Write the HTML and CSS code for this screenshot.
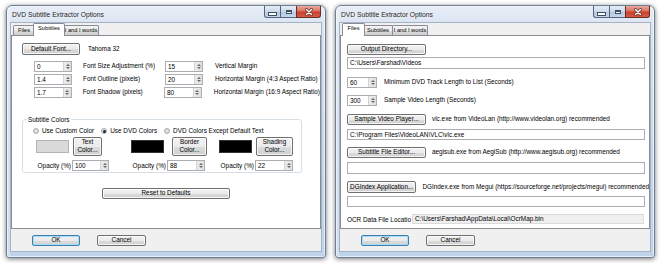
FILE: index.html
```html
<!DOCTYPE html>
<html>
<head>
<meta charset="utf-8">
<title>DVD Subtitle Extractor Options</title>
<link rel="stylesheet" href="styles.css">
</head>
<body>
<div class="desktop">
  <div class="window">
    <div class="titlebar">
      <span class="title">DVD Subtitle Extractor Options</span>
      <div class="caption">
        <span class="cbtn cmin"><i></i></span>
        <span class="cbtn cmax"><i></i></span>
        <span class="cbtn cclose"><svg width="10" height="8" viewBox="0 0 10 8"><path d="M2.5 1.5 L7.5 6.5 M7.5 1.5 L2.5 6.5" stroke="#5a1a14" stroke-width="2.6" stroke-linecap="round"/><path d="M2.5 1.5 L7.5 6.5 M7.5 1.5 L2.5 6.5" stroke="#fff" stroke-width="1.5" stroke-linecap="round"/></svg></span>
      </div>
    </div>
    <div class="client">
      <div class="tabs">
        <span class="tab t-files">Files</span>
        <span class="tab t-subs active">Subtitles</span>
        <span class="tab t-words">I and I words</span>
      </div>
      <div class="page page-subs">
        <div class="font-row">
          <span class="btn btn-font">Default Font...</span>
          <span class="font-name">Tahoma 32</span>
        </div>
        <div class="spin-rows">
          <div class="srow">
            <span class="spin s38"><span class="val">0</span><span class="arrows"><i class="up"></i><i class="dn"></i></span></span>
            <span class="lbl l82">Font Size Adjustment (%)</span>
            <span class="spin s38"><span class="val">15</span><span class="arrows"><i class="up"></i><i class="dn"></i></span></span>
            <span class="lbl l2">Vertical Margin</span>
          </div>
          <div class="srow">
            <span class="spin s38"><span class="val">1.4</span><span class="arrows"><i class="up"></i><i class="dn"></i></span></span>
            <span class="lbl l82">Font Outline (pixels)</span>
            <span class="spin s38"><span class="val">20</span><span class="arrows"><i class="up"></i><i class="dn"></i></span></span>
            <span class="lbl l2">Horizontal Margin (4:3 Aspect Ratio)</span>
          </div>
          <div class="srow">
            <span class="spin s38"><span class="val">1.7</span><span class="arrows"><i class="up"></i><i class="dn"></i></span></span>
            <span class="lbl l82">Font Shadow (pixels)</span>
            <span class="spin s38"><span class="val">80</span><span class="arrows"><i class="up"></i><i class="dn"></i></span></span>
            <span class="lbl l2">Horizontal Margin (16:9 Aspect Ratio)</span>
          </div>
        </div>
        <fieldset class="group">
          <legend>Subtitle Colors</legend>
          <div class="radios">
            <span class="radio"><i class="rb"></i>Use Custom Color</span>
            <span class="radio"><i class="rb on"></i>Use DVD Colors</span>
            <span class="radio"><i class="rb"></i>DVD Colors Except Default Text</span>
          </div>
          <div class="colors">
            <div class="ccol c1">
              <div class="cline"><span class="swatch light"></span><span class="btn cbtn2 w29">Text<br>Color...</span></div>
              <div class="oline"><span class="olbl">Opacity (%)</span><span class="spin s37"><span class="val">100</span><span class="arrows"><i class="up"></i><i class="dn"></i></span></span></div>
            </div>
            <div class="ccol c2">
              <div class="cline"><span class="swatch dark"></span><span class="btn cbtn2 w35 gap8">Border<br>Color...</span></div>
              <div class="oline"><span class="olbl">Opacity (%)</span><span class="spin s38"><span class="val">88</span><span class="arrows"><i class="up"></i><i class="dn"></i></span></span></div>
            </div>
            <div class="ccol c3">
              <div class="cline"><span class="swatch dark"></span><span class="btn cbtn2 w37">Shading<br>Color...</span></div>
              <div class="oline"><span class="olbl">Opacity (%)</span><span class="spin s38"><span class="val">22</span><span class="arrows"><i class="up"></i><i class="dn"></i></span></span></div>
            </div>
          </div>
        </fieldset>
        <div class="reset-row"><span class="btn btn-reset">Reset to Defaults</span></div>
      </div>
      <div class="footer">
        <span class="btn btn-ok">OK</span>
        <span class="btn btn-cancel">Cancel</span>
      </div>
    </div>
  </div>

  <div class="window">
    <div class="titlebar">
      <span class="title">DVD Subtitle Extractor Options</span>
      <div class="caption">
        <span class="cbtn cmin"><i></i></span>
        <span class="cbtn cmax"><i></i></span>
        <span class="cbtn cclose"><svg width="10" height="8" viewBox="0 0 10 8"><path d="M2.5 1.5 L7.5 6.5 M7.5 1.5 L2.5 6.5" stroke="#5a1a14" stroke-width="2.6" stroke-linecap="round"/><path d="M2.5 1.5 L7.5 6.5 M7.5 1.5 L2.5 6.5" stroke="#fff" stroke-width="1.5" stroke-linecap="round"/></svg></span>
      </div>
    </div>
    <div class="client">
      <div class="tabs">
        <span class="tab t-files active">Files</span>
        <span class="tab t-subs">Subtitles</span>
        <span class="tab t-words">I and I words</span>
      </div>
      <div class="page page-files">
        <span class="btn btn-wide first">Output Directory...</span>
        <div class="field f12 m2">C:\Users\Farshad\Videos</div>
        <div class="frow m8">
          <span class="spin s30"><span class="val">60</span><span class="arrows"><i class="up"></i><i class="dn"></i></span></span>
          <span class="flbl">Minimum DVD Track Length to List (Seconds)</span>
        </div>
        <div class="frow m7">
          <span class="spin s30"><span class="val">300</span><span class="arrows"><i class="up"></i><i class="dn"></i></span></span>
          <span class="flbl">Sample Video Length (Seconds)</span>
        </div>
        <div class="frow m8">
          <span class="btn btn-wide">Sample Video Player...</span>
          <span class="blbl">vlc.exe from VideoLan (http://www.videolan.org) recommended</span>
        </div>
        <div class="field m4">C:\Program Files\VideoLAN\VLC\vlc.exe</div>
        <div class="frow m7">
          <span class="btn btn-wide">Subtitle File Editor...</span>
          <span class="blbl">aegisub.exe from AegiSub (http://www.aegisub.org) recommended</span>
        </div>
        <div class="field f12 m4"></div>
        <div class="frow m7">
          <span class="btn btn-wide h12">DGIndex Application...</span>
          <span class="blbl">DGIndex.exe from Megui (https://sourceforge.net/projects/megui) recommended</span>
        </div>
        <div class="field m3"></div>
        <div class="frow m7">
          <span class="ocr-lbl">OCR Data File Locatio</span>
          <span class="field ro">C:\Users\Farshad\AppData\Local\OcrMap.bin</span>
        </div>
      </div>
      <div class="footer">
        <span class="btn btn-ok">OK</span>
        <span class="btn btn-cancel">Cancel</span>
      </div>
    </div>
  </div>
</div>
</body>
</html>
```

FILE: styles.css
```css
* { box-sizing: border-box; margin: 0; padding: 0; }
html, body { background: #ffffff; }
body {
  width: 660px;
  height: 263px;
  overflow: hidden;
  font-family: "Liberation Sans", Arial, sans-serif;
  font-size: 6.4px;
  line-height: 1;
  color: #000;
}

.desktop {
  display: flex;
  gap: 9px;
  padding: 5px 0 0 6px;
}

/* ---------- window frame ---------- */
.window {
  width: 320px;
  height: 253px;
  display: flex;
  flex-direction: column;
  border: 1px solid #6d7f95;
  border-radius: 6px 6px 3px 3px;
  padding: 0 3px 5px;
  background:
    linear-gradient(90deg, rgba(255,255,255,0) 0, rgba(255,255,255,.35) 2px, rgba(255,255,255,0) 4px),
    linear-gradient(180deg, #e8eef7 0%, #d9e4f1 8%, #cbdaed 45%, #bfd3ea 100%);
  box-shadow: 0 1px 5px rgba(0,0,0,.55), inset 0 0 0 1px rgba(255,255,255,.6);
}

.titlebar {
  height: 16px;
  display: flex;
  justify-content: space-between;
  align-items: flex-start;
}
.title {
  padding: 6px 0 0 2px;
  font-size: 6.7px;
  color: #1b1b1b;
  text-shadow: 0 0 3px rgba(255,255,255,.9);
}
.caption {
  display: flex;
  margin-right: 1px;
}
.cbtn {
  height: 12px;
  display: flex;
  align-items: center;
  justify-content: center;
  border: 1px solid #55667c;
  border-top: none;
}
.cmin, .cmax {
  width: 16px;
  background: linear-gradient(180deg, #e6eef8 0%, #cbd9ea 50%, #b2c6de 51%, #c4d6ec 100%);
}
.cmin { border-radius: 0 0 0 3px; border-right: none; }
.cmax { border-right: none; }
.cmin i {
  width: 7px; height: 2px; margin-top: 4px;
  background: #fff; border: 1px solid #3e4e63; box-sizing: content-box;
}
.cmax i {
  width: 6px; height: 4px;
  border: 1px solid #3e4e63; box-shadow: inset 0 0 0 1px #fff;
  border-top-width: 2px; background: transparent;
}
.cclose {
  width: 25px;
  border-radius: 0 0 3px 0;
  border-color: #6a2b22;
  background: linear-gradient(180deg, #eaa99c 0%, #d9705f 48%, #c73f2c 52%, #d65a45 100%);
}

/* ---------- client ---------- */
.client {
  flex: 1;
  display: flex;
  flex-direction: column;
  background: #f0f0f0;
  border: 1px solid #a3b2c5;
}

.tabs {
  height: 12px;
  display: flex;
  align-items: flex-end;
  padding-left: 2px;
  font-size: 5.7px;
}
.tab {
  height: 10px;
  display: flex;
  align-items: center;
  justify-content: center;
  border: 1px solid #898c95;
  border-bottom: none;
  border-radius: 2px 2px 0 0;
  background: linear-gradient(180deg, #f4f4f4 0%, #ebebeb 50%, #dddddd 51%, #cfcfcf 100%);
  color: #000;
}
.t-files { width: 22px; }
.t-subs { width: 30px; margin-left: -1px; }
.t-words { width: 36px; margin-left: -1px; }
.tab.active {
  height: 13px;
  margin-bottom: -1px;
  background: #fff;
  position: relative;
  z-index: 2;
  padding-bottom: 2px;
}
.t-subs.active { width: 32px; margin-left: -2px; margin-right: -1px; }
.t-files.active { width: 23px; margin-left: 0; margin-right: -1px; }

.page {
  height: 194px;
  background: #fff;
  border: 1px solid #898c95;
  position: relative;
  overflow: hidden;
}

.footer {
  flex: 1;
  display: flex;
  align-items: flex-start;
  padding: 6px 0 0 21px;
}

/* ---------- common controls ---------- */
.btn {
  display: flex;
  align-items: center;
  justify-content: center;
  text-align: center;
  border: 1px solid #707070;
  border-radius: 2px;
  background: linear-gradient(180deg, #f2f2f2 0%, #ebebeb 50%, #dddddd 51%, #cfcfcf 100%);
  box-shadow: inset 0 0 0 1px rgba(255,255,255,.75);
  color: #000;
  white-space: nowrap;
}
.btn-ok {
  width: 48px; height: 11px;
  border-color: #3c7fb1;
  box-shadow: inset 0 0 0 1px #a6dcf5;
}
.btn-cancel { width: 49px; height: 11px; margin-left: 17px; }

.spin {
  display: flex;
  height: 11px;
  border: 1px solid #abadb3;
  background: #fff;
}
.spin .val {
  flex: 1;
  padding: 1px 0 0 2px;
  display: flex;
  align-items: center;
}
.spin .arrows {
  width: 8px;
  display: flex;
  flex-direction: column;
  align-items: center;
  justify-content: center;
  gap: 1px;
  background: linear-gradient(90deg, #ececec, #e0e0e0);
  border-left: 1px solid #d3d3d3;
}
.spin .up, .spin .dn {
  width: 0; height: 0;
  border-left: 2px solid transparent;
  border-right: 2px solid transparent;
}
.spin .up { border-bottom: 2px solid #6b6b6b; }
.spin .dn { border-top: 2px solid #6b6b6b; }
.s38 { width: 38px; }
.s37 { width: 37px; }
.s30 { width: 30px; }

.field {
  display: flex;
  align-items: center;
  height: 11px;
  width: 298px;
  border: 1px solid #abadb3;
  background: #fff;
  padding: 1px 0 0 2px;
  white-space: nowrap;
}
.f12 { height: 12px; }

/* ---------- subtitles page ---------- */
.font-row {
  display: flex;
  align-items: center;
  margin: 7px 0 0 10px;
}
.btn-font { width: 58px; height: 12px; }
.font-name { margin-left: 8px; }

.spin-rows {
  display: flex;
  flex-direction: column;
  gap: 2px;
  margin: 6px 0 0 22px;
}
.srow { display: flex; align-items: center; }
.lbl { white-space: nowrap; }
.l82 { width: 82px; margin-left: 11px; }
.l2 { margin-left: 12px; }

.group {
  margin: 18px 18px 0 10px;
  height: 57px;
  border: 1px solid #d5dfe5;
  border-radius: 3px;
  padding: 0;
}
.group legend {
  margin-left: 4px;
  padding: 0 1px;
  line-height: 7px;
}
.radios {
  display: flex;
  align-items: center;
  margin: 5px 0 0 10px;
  white-space: nowrap;
}
.radio { display: flex; align-items: center; }
.radio + .radio { margin-left: 7px; }
.rb {
  width: 6px; height: 6px;
  border-radius: 50%;
  border: 1px solid #a9a9a9;
  background: radial-gradient(circle, #e6e6e6 0%, #d2d2d2 100%);
  margin-right: 3px;
  display: flex;
  align-items: center;
  justify-content: center;
}
.rb.on::after {
  content: "";
  width: 3px; height: 3px;
  border-radius: 50%;
  background: #1d2f3f;
}

.colors {
  display: grid;
  grid-template-columns: 95px 88px 80px;
  margin: 2px 0 0 13px;
}
.cline { display: flex; align-items: center; height: 20px; }
.swatch { width: 33px; height: 13px; border: 1px solid #a0a0a0; }
.swatch.light { background: #dadada; border-color: #b4b4b4; }
.swatch.dark { background: #000; border-color: #333; }
.cbtn2 {
  height: 19px;
  margin-left: 4px;
  line-height: 1.25;
  flex-direction: column;
}
.w29 { width: 29px; }
.w35 { width: 35px; }
.w37 { width: 37px; }
.gap8 { margin-left: 8px; }
.oline { display: flex; align-items: center; margin-top: 4px; }
.olbl { width: 36px; padding-right: 1px; text-align: right; white-space: nowrap; }

.reset-row {
  display: flex;
  justify-content: center;
  margin-top: 15px;
}
.btn-reset { width: 128px; height: 11px; }

/* ---------- files page ---------- */
.page-files { padding-left: 6px; }
.btn-wide { width: 79px; height: 11px; }
.btn-wide.first { margin-top: 8px; }
.h12 { height: 12px; }
.m2 { margin-top: 2px; }
.m3 { margin-top: 3px; }
.m4 { margin-top: 4px; }
.m7 { margin-top: 7px; }
.m8 { margin-top: 8px; }
.frow { display: flex; align-items: center; white-space: nowrap; }
.flbl { margin-left: 7px; }
.blbl { margin-left: 6px; }
.ocr-lbl {
  width: 65px;
  overflow: hidden;
  white-space: nowrap;
  padding-top: 2px;
}
.field.ro {
  width: 232px;
  height: 10px;
  background: #efefef;
  border-color: #dadada;
}
```
